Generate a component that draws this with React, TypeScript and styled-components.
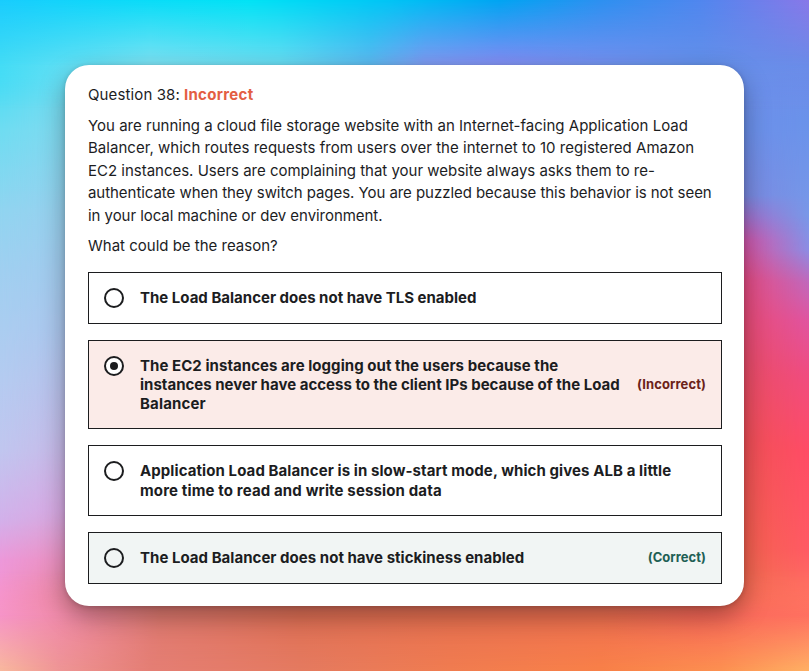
import React from 'react';
import styled, { createGlobalStyle } from 'styled-components';

const GlobalStyle = createGlobalStyle`
  * { box-sizing: border-box; }
  html, body { margin: 0; padding: 0; overflow: hidden; }
  body { font-family: Inter, "Open Sans", sans-serif; color: #1c1d1f; }
`;

const Page = styled.main`
  position: relative;
  isolation: isolate;
  width: 809px;
  height: 671px;
  padding: 65px;
  overflow: hidden;
  background: linear-gradient(180deg, #7ee0f4 0, #82dcf0 100px, #9ccfee 220px, #adc5ee 330px, #c5b9e8 430px, #dca6e0 510px, #ea8eb4 560px, #e47c80 610px, #e67c6e 671px);
`;

/* Decorative colour washes behind the card */
const Wash = styled.div<{ $paint: string; $mask: string }>`
  position: absolute;
  inset: 0;
  z-index: -1;
  background: ${(p) => p.$paint};
  mask-image: ${(p) => p.$mask};
`;

const Card = styled.section`
  width: 679px;
  height: 541px;
  padding: 19px 22px 0 23px;
  border-radius: 24px;
  background: #fff;
  box-shadow: 0 10px 26px rgba(0, 0, 0, 0.34), 0 1px 5px rgba(0, 0, 0, 0.16);
`;

const Line = styled.span<{ $track?: number }>`
  display: block;
  width: max-content;
  white-space: nowrap;
  letter-spacing: ${(p) => p.$track ?? 0}px;
`;

const Heading = styled.div`
  display: flex;
  gap: 4px;
  font-size: 15px;
  line-height: 22.4px;
`;

const Verdict = styled.strong`
  color: #e35e43;
  font-weight: 700;
`;

const Paragraph = styled.p`
  margin: 8px 0 0;
  font-size: 15px;
  line-height: 22.4px;

  ${Heading} + & {
    margin-top: 8.6px;
  }
`;

const Options = styled.div`
  display: flex;
  flex-direction: column;
  gap: 16px;
  margin-top: 14.4px;
`;

type Tone = 'plain' | 'wrong' | 'right';
const fills: Record<Tone, string> = { plain: '#fff', wrong: '#fbebe8', right: '#f1f5f4' };

const Option = styled.label<{ $tone: Tone }>`
  display: flex;
  align-items: center;
  min-height: 52px;
  padding: 15px;
  border: 1px solid #1c1d1f;
  background: ${(p) => fills[p.$tone]};
`;

const Radio = styled.span<{ $checked: boolean }>`
  display: grid;
  place-items: center;
  align-self: flex-start;
  flex: none;
  width: 20px;
  height: 20px;
  margin-right: 16px;
  border: 2px solid #1c1d1f;
  border-radius: 50%;
  background: ${(p) => (p.$checked ? '#fff' : 'transparent')};

  &::after {
    content: '';
    width: 8px;
    height: 8px;
    border-radius: 50%;
    background: ${(p) => (p.$checked ? '#1c1d1f' : 'transparent')};
  }
`;

const Answer = styled.span`
  flex: 1;
  font-size: 15px;
  font-weight: 700;
  line-height: 19.2px;
`;

const Result = styled.span<{ $tone: Tone }>`
  flex: none;
  font-size: 13px;
  font-weight: 700;
  line-height: 17px;
  color: ${(p) => (p.$tone === 'wrong' ? '#6b2219' : '#1e6055')};
`;

type TextLine = [string, number];

const question: TextLine[] = [
  ['You are running a cloud file storage website with an Internet-facing Application Load', 0.01],
  ['Balancer, which routes requests from users over the internet to 10 registered Amazon', 0.027],
  ['EC2 instances. Users are complaining that your website always asks them to re-', -0.01],
  ['authenticate when they switch pages. You are puzzled because this behavior is not seen', -0.05],
  ['in your local machine or dev environment.', -0.05],
];

const options: { tone: Tone; checked?: boolean; lines: TextLine[]; result?: TextLine }[] = [
  { tone: 'plain', lines: [['The Load Balancer does not have TLS enabled', 0]] },
  {
    tone: 'wrong',
    checked: true,
    lines: [
      ['The EC2 instances are logging out the users because the', 0.05],
      ['instances never have access to the client IPs because of the Load', 0.01],
      ['Balancer', 0.15],
    ],
    result: ['(Incorrect)', 0.1],
  },
  {
    tone: 'plain',
    lines: [
      ['Application Load Balancer is in slow-start mode, which gives ALB a little', 0.085],
      ['more time to read and write session data', 0.14],
    ],
  },
  { tone: 'right', lines: [['The Load Balancer does not have stickiness enabled', 0.03]], result: ['(Correct)', 0.04] },
];

const washes = [
  {
    paint: 'linear-gradient(180deg, #19cdfc 0, #3fdcf5 60px, #6edcf1 130px, #90d4f0 210px, #9fcff0 270px, #b4cbf0 380px, #c0c6ef 450px, #d2b0ea 520px, #ec98da 560px, #f594cf 600px, #f3a0b8 640px, #f6b8a0 671px)',
    mask: 'linear-gradient(90deg, #000 0, transparent 90px)',
  },
  {
    paint: 'linear-gradient(180deg, #7090ee 0, #6c90ea 130px, #7a88e0 195px, #a66cc8 218px, #d454a8 240px, #e84a80 280px, #e84c68 360px, #f05056 440px, #f4604e 540px, #f07050 610px)',
    mask: 'linear-gradient(90deg, transparent 650px, #000 735px)',
  },
  {
    paint: 'linear-gradient(180deg, #7686e8 0, #6a92ea 120px, #7898e8 215px, #8c8ce4 250px, #c068bc 282px, #e054a0 320px, #f04c80 375px, #ff4c66 450px, #ff5a64 550px, #ff7a62 610px, #ffac60 671px)',
    mask: 'linear-gradient(90deg, transparent 740px, #000 809px)',
  },
  {
    paint: 'linear-gradient(90deg, #44dcf5 0, #80e2f3 150px, #6cdcf2 280px, #60b8f0 370px, #8498f2 425px, #888cf4 500px, #7690f0 600px, #6490ea 700px, #6a8ce8 809px)',
    mask: 'linear-gradient(180deg, #000 60px, transparent 110px)',
  },
  {
    paint: 'linear-gradient(90deg, #19ccfd 0, #08dcf8 150px, #00e2f5 250px, #00c4f5 390px, #00a4f2 500px, #2c90f0 600px, #5086ee 700px, #8878e8 809px)',
    mask: 'linear-gradient(180deg, #000 0, transparent 66px)',
  },
  {
    paint: 'linear-gradient(90deg, #f694c8 0, #ee88a0 80px, #e07a70 160px, #e07055 300px, #e87050 450px, #f07050 600px, #f86858 700px, #ff7060 809px)',
    mask: 'linear-gradient(180deg, transparent 570px, #000 615px)',
  },
  {
    paint: 'linear-gradient(90deg, #f8b89c 0, #ee9494 60px, #e47e74 150px, #e47a60 300px, #f07c50 450px, #f88048 600px, #fc9050 720px, #ffb064 809px)',
    mask: 'linear-gradient(180deg, transparent 615px, #000 671px)',
  },
];

export default function App() {
  return (
    <Page>
      <GlobalStyle />
      {washes.map((w, i) => (
        <Wash key={i} $paint={w.paint} $mask={w.mask} />
      ))}
      <Card>
        <Heading>
          <Line $track={0.12}>Question 38:</Line>
          <Verdict><Line $track={0.3}>Incorrect</Line></Verdict>
        </Heading>
        <Paragraph>
          {question.map(([text, track]) => (
            <Line key={text} $track={track}>{text}</Line>
          ))}
        </Paragraph>
        <Paragraph>
          <Line>What could be the reason?</Line>
        </Paragraph>
        <Options>
          {options.map((o) => (
            <Option key={o.lines[0][0]} $tone={o.tone}>
              <Radio $checked={!!o.checked} />
              <Answer>
                {o.lines.map(([text, track]) => (
                  <Line key={text} $track={track}>{text}</Line>
                ))}
              </Answer>
              {o.result && (
                <Result $tone={o.tone}>
                  <Line $track={o.result[1]}>{o.result[0]}</Line>
                </Result>
              )}
            </Option>
          ))}
        </Options>
      </Card>
    </Page>
  );
}
